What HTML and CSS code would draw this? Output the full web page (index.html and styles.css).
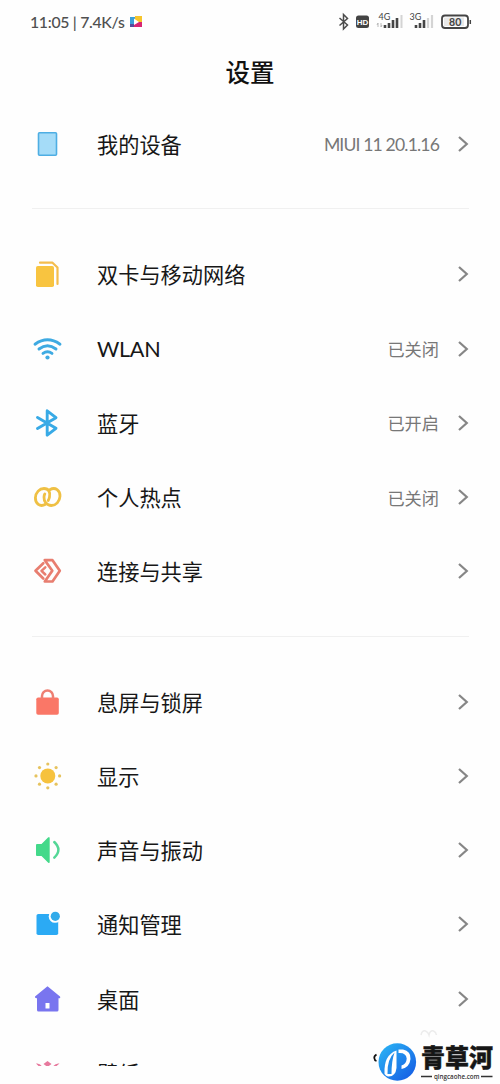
FILE: index.html
```html
<!DOCTYPE html>
<html lang="zh-CN">
<head>
<meta charset="utf-8">
<title>设置</title>
<link rel="stylesheet" href="styles.css">
</head>
<body>
<svg width="0" height="0" class="defs">
  <symbol id="chevron" viewBox="0 0 12 18"><path d="M2 2 L9.8 9 L2 16" fill="none" stroke="#868686" stroke-width="2.2"/></symbol>
</svg>
<main class="screen">
  <header class="status">
    <span class="clock">11:05 | 7.4K/s</span>
    <svg class="app" width="12" height="12" viewBox="0 0 12 12"><path d="M0 1H6V11H0Z" fill="#3b9fd8"/><path d="M5 0H12V6H5Z" fill="#f6c52c"/><path d="M5 6H12V11H3Z" fill="#d72672"/><path d="M0 8H4V11H0Z" fill="#564b9d"/><path d="M4 2.5L9 6L4 9Z" fill="#fff"/></svg>
    <svg class="indicators" width="136" height="24" viewBox="0 0 136 24">
      <path d="M1.500 8L9.500 15L5.500 19V4.500L9.500 8.500L1.500 15.500" fill="none" stroke="#4c4c4c" stroke-width="1.5"/>
      <rect x="18" y="5.500" width="13" height="12.500" rx="2.5" fill="#444"/>
      <text x="24.5" y="14.8" class="hd">HD</text>
      <text x="40.500" y="10" class="net">4G</text>
      <path d="M40 13v4M43 13v4M39 15l1-2M43 17l1-2" stroke="#aaa" stroke-width=".8"/>
      <path d="M47 18v-3M51 18v-5M55 18v-8M59 18v-10" stroke="#454545" stroke-width="2.6"/>
      <path d="M63.500 18v-13" stroke="#d4d4d4" stroke-width="2"/>
      <text x="71.500" y="10" class="net">3G</text>
      <path d="M78 18v-3M82 18v-5M86 18v-8" stroke="#454545" stroke-width="2.6"/>
      <path d="M90 18v-10M94 18v-13" stroke="#d4d4d4" stroke-width="2.200"/>
      <rect x="104" y="5.500" width="26" height="12.500" rx="3" fill="#fff" stroke="#444" stroke-width="1.800"/>
      <rect x="106" y="7.500" width="20" height="8.500" fill="#e9e9e9"/>
      <path d="M132.300 10v4" stroke="#444" stroke-width="1.500"/>
      <text x="117.200" y="15.600" class="pct">80</text>
    </svg>
  </header>
  <h1 class="title">设置</h1>

  <section class="group">
    <div class="row">
      <svg class="icon" viewBox="0 0 32 32"><rect x="6.500" y="4.700" width="18" height="22.600" rx="1" fill="#a5dcf8" stroke="#4eaee3" stroke-width="1.600"/></svg>
      <span class="label">我的设备</span><span class="value latin">MIUI 11 20.1.16</span><svg class="arrow"><use href="#chevron"/></svg>
    </div>
  </section>

  <section class="group">
    <div class="row">
      <svg class="icon" viewBox="0 0 32 32"><rect x="4" y="8" width="18" height="21" rx="1.800" fill="#f8c440"/><path d="M8 4.700H20.500L25.500 9.500V26" fill="none" stroke="#f4bd4d" stroke-width="2.200" stroke-linejoin="round" stroke-linecap="round"/></svg>
      <span class="label">双卡与移动网络</span><svg class="arrow"><use href="#chevron"/></svg>
    </div>
    <div class="row">
      <svg class="icon" viewBox="0 0 32 32"><g fill="none" stroke="#3eaae2" stroke-width="2.900" stroke-linecap="round"><path d="M3 11.200Q15.500 2.500 28 11.200"/><path d="M7 16Q15.500 9.500 24 16"/><path d="M11 20.400Q15.500 17 20 20.400"/></g><circle cx="15.500" cy="24.500" r="2.100" fill="#3eaae2"/></svg>
      <span class="label wlan">WLAN</span><span class="value">已关闭</span><svg class="arrow"><use href="#chevron"/></svg>
    </div>
    <div class="row">
      <svg class="icon" viewBox="0 0 32 32"><path d="M5.500 10.500L24 21.300L15.200 28.200V3.800L24 10.700L5.500 21.500" fill="none" stroke="#38aae6" stroke-width="2.900" stroke-linejoin="round" stroke-linecap="round"/></svg>
      <span class="label">蓝牙</span><span class="value">已开启</span><svg class="arrow"><use href="#chevron"/></svg>
    </div>
    <div class="row">
      <svg class="icon" viewBox="0 0 32 32"><g fill="none" stroke="#efc044" stroke-width="2.800" stroke-linecap="round"><path d="M13.500 23.300C8 26.500 3.200 22.500 3.400 16.800C3.700 11.500 7.500 7.500 12 7.500C16.800 7.500 18.500 11.500 17.500 16C17.200 17.500 16.800 18.500 16.200 19.500"/><path d="M17.800 8.700C23.500 5.500 28.200 9.500 28 15.200C27.700 20.500 23.900 24.500 19.400 24.500C14.600 24.500 11.800 20.500 12 16C12.100 14.700 12.400 13.700 12.800 13"/></g></svg>
      <span class="label">个人热点</span><span class="value">已关闭</span><svg class="arrow"><use href="#chevron"/></svg>
    </div>
    <div class="row">
      <svg class="icon" viewBox="0 0 32 32"><g fill="none" stroke="#e87e70" stroke-width="2.700" stroke-linejoin="round" stroke-linecap="round"><path d="M11.300 8.200L3.500 15.700L11.300 23.500"/><path d="M12.800 5.200H20.500L27.800 15.800L20.500 26.500H12.800L20.300 15.800L12.800 5.200"/><path d="M13.300 12.300L9.500 15.800L13.300 19.500" stroke-width="2.500"/></g></svg>
      <span class="label">连接与共享</span><svg class="arrow"><use href="#chevron"/></svg>
    </div>
  </section>

  <section class="group">
    <div class="row">
      <svg class="icon" viewBox="0 0 32 32"><rect x="4.300" y="11.500" width="22.500" height="17.200" rx="1.800" fill="#fa7767"/><path d="M10 13V10A5.500 5.500 0 0 1 21 10V13" fill="none" stroke="#ee7f72" stroke-width="2.500"/></svg>
      <span class="label">息屏与锁屏</span><svg class="arrow"><use href="#chevron"/></svg>
    </div>
    <div class="row">
      <svg class="icon" viewBox="0 0 32 32"><g fill="#f6c23e"><circle cx="15.800" cy="15.900" r="7.500"/><g fill="#e6c35e"><circle cx="15.800" cy="4" r="1.600"/><circle cx="15.800" cy="27.800" r="1.600"/><circle cx="4" cy="15.900" r="1.600"/><circle cx="27.600" cy="15.900" r="1.600"/><circle cx="7.500" cy="7.600" r="1.600"/><circle cx="24.100" cy="7.600" r="1.600"/><circle cx="7.500" cy="24.200" r="1.600"/><circle cx="24.100" cy="24.200" r="1.600"/></g></g></svg>
      <span class="label">显示</span><svg class="arrow"><use href="#chevron"/></svg>
    </div>
    <div class="row">
      <svg class="icon" viewBox="0 0 32 32"><path d="M5 10H9.500L16 3.500Q17.700 2 17.700 4.500V27.500Q17.700 30 16 28.500L9.500 22H5Q4 22 4 21V11Q4 10 5 10Z" fill="#43d98a"/><path d="M22.300 8Q30.500 15.800 22.300 23.700" fill="none" stroke="#54d797" stroke-width="2.500" stroke-linecap="round"/></svg>
      <span class="label">声音与振动</span><svg class="arrow"><use href="#chevron"/></svg>
    </div>
    <div class="row">
      <svg class="icon" viewBox="0 0 32 32"><rect x="4.500" y="6" width="21.700" height="21" rx="1.800" fill="#2baaf4"/><circle cx="23" cy="8.500" r="6.300" fill="#fefefe"/><circle cx="23.300" cy="8.300" r="4.600" fill="#32abea"/></svg>
      <span class="label">通知管理</span><svg class="arrow"><use href="#chevron"/></svg>
    </div>
    <div class="row">
      <svg class="icon" viewBox="0 0 32 32"><path d="M15.500 3.300L28 13.500Q29 15.500 26.500 15.300V27Q26.500 28.500 25 28.500H6.500Q5 28.500 5 27V15.300Q2.500 15.500 3 13.500Z" fill="#7975ef"/><rect x="13.500" y="20" width="4" height="5.500" fill="#fff"/></svg>
      <span class="label">桌面</span><svg class="arrow"><use href="#chevron"/></svg>
    </div>
    <div class="row">
      <svg class="icon" viewBox="0 0 32 32"><g fill="#e7799d"><path d="M15.500 4L19.500 7L15.500 10L11.500 7Z"/><path d="M4 6.500Q8 5.800 10 9.500H7ZM27.500 6.500Q23.500 5.800 21 9.500H24Z"/><circle cx="15.500" cy="18" r="7.500"/></g></svg>
      <span class="label">壁纸</span>
    </div>
  </section>
</main>

<aside class="watermark">
  <svg width="128" height="58" viewBox="0 0 128 58">
    <defs><linearGradient id="badge" x1="0" y1="0" x2="1" y2="1"><stop offset="0" stop-color="#2cb9f5"/><stop offset="1" stop-color="#1356e3"/></linearGradient></defs>
    <path d="M49 8Q50 3 53.500 4Q56 5 57 8Q58 3 61.500 4Q64 5 64.500 8" fill="none" stroke="#ececec" stroke-width="1.500"/>
    <path d="M4.500 27.500Q2 29 2.300 31Q2.500 33.500 4.500 34" fill="none" stroke="#111" stroke-width="1.800"/>
    <circle cx="25.300" cy="35" r="18.800" fill="url(#badge)"/>
    <path d="M12.500 47Q11.500 28 24.500 23.500V41Q23.500 50 16 49.500Q14 49 12.500 47Z" fill="#fff"/>
    <path d="M15.500 47Q15 32 22.500 25.500Q19.500 34 19.500 47Z" fill="#228be9"/>
    <path d="M26.500 22.500H31Q39 24 38.500 32Q37.500 40.500 29.500 42V38.500Q34.500 37 34.700 31.500Q34 26 28 26H26.500Z" fill="#fff"/>
    <text x="49" y="39.500" class="brand" textLength="72" lengthAdjust="spacingAndGlyphs">青草河</text>
    <path d="M49 49.500H60M109 49.500H120.500" stroke="#333" stroke-width="1.600"/>
    <text x="62" y="51.500" class="site" textLength="45.500" lengthAdjust="spacingAndGlyphs">qingcaohe.com</text>
  </svg>
</aside>
</body>
</html>
```
FILE: styles.css
```css
* { box-sizing: border-box; }
body {
  margin: 0;
  width: 500px;
  height: 1084px;
  overflow: hidden;
  background: #fefefe;
  color: #171717;
  font-family: Lato, "Noto Sans CJK SC", sans-serif;
}
.defs { position: absolute; }
.screen { height: 1066px; overflow: hidden; }
.status {
  display: flex;
  align-items: center;
  height: 44px;
  padding: 0 26px 0 30px;
}
.clock { width: 95px; white-space: nowrap; font: 500 15.8px/20px Lato, sans-serif; color: #505050; letter-spacing: -0.3px; }
.app { margin-left: 5px; }
.indicators { margin-left: auto; }
.hd { font: 700 8px "Liberation Sans", sans-serif; fill: #fff; text-anchor: middle; }
.net { font: 9px Lato, sans-serif; fill: #444; }
.pct { font: 700 10.5px Lato, sans-serif; fill: #444; text-anchor: middle; }
.title {
  margin: 0;
  height: 63px;
  line-height: 58px;
  text-align: center;
  font-size: 24.5px;
  font-weight: 500;
  color: #111;
}
.group + .group::before {
  content: "";
  display: block;
  height: 1px;
  margin: 27px 31px 28px 32px;
  background: #f0f0f0;
}
.row {
  display: flex;
  align-items: center;
  height: 74.25px;
  padding: 0 31px 0 32px;
}
.icon { width: 32px; height: 32px; flex: none; }
.label { margin-left: 33px; font-size: 21.2px; line-height: 32px; padding-top: 2px; }
.wlan { font-size: 21.6px; letter-spacing: -0.3px; padding-top: 1px; }
.value { margin-left: auto; margin-right: 18px; font-size: 17.2px; color: #777; }
.latin { font-size: 17.6px; letter-spacing: -0.85px; }
.arrow { width: 12px; height: 18px; flex: none; margin-left: auto; }
.value + .arrow { margin-left: 0; }
.watermark { position: absolute; left: 372px; top: 1027px; height: 57px; }
.brand { font: 900 24.5px "Noto Sans CJK SC", sans-serif; fill: #161616; stroke: #161616; stroke-width: 0.5px; }
.site { font: 600 7px "Open Sans", sans-serif; fill: #333; }
```
